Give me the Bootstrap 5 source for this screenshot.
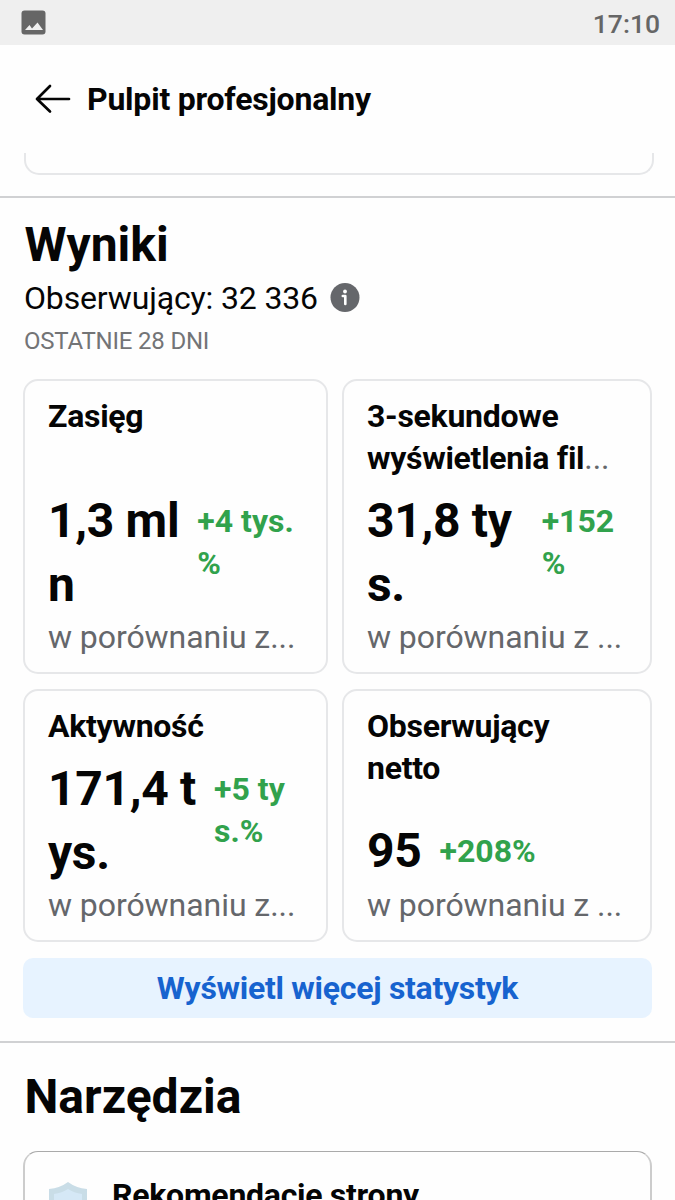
<!DOCTYPE html>
<html lang="pl">
<head>
<meta charset="utf-8">
<meta name="viewport" content="width=device-width, initial-scale=1">
<title>Pulpit profesjonalny</title>
<link href="https://cdn.jsdelivr.net/npm/bootstrap@5.3.0/dist/css/bootstrap.min.css" rel="stylesheet">
<style>
  body { font-family: Roboto, "Liberation Sans", sans-serif; color: #050505; background: #fefefe; width: 675px; height: 1200px; overflow: hidden; font-size: 32px; line-height: 42px; }
  .statusbar { height: 45px; background: #efefef; color: #666; font-size: 26.5px; font-weight: 500; line-height: 43px; padding: 0 15px 0 21px; }
  .clock { padding-top: 2px; }
  .topbar { height: 107px; padding: 0 35px; gap: 16px; }
  .topbar h1 { font-size: 32px; line-height: 42px; font-weight: 700; letter-spacing: -.22px; }
  .prev-panel { height: 22px; margin: 1px 21px 0 24px; border: 2px solid #e6e7e9; border-top: 0; border-radius: 0 0 15px 15px; }
  .rule { height: 2px; background: #d0d1d3; }
  .rule-first { margin-top: 21px; }
  .rule-second { margin-top: 23px; }
  .section { padding: 0 23px; }
  .section h2 { font-size: 48px; line-height: 64px; font-weight: 700; padding-left: 1.5px; }
  .results { padding-top: 15px; }
  .followers { padding-left: 1px; gap: 12px; letter-spacing: -.15px; }
  .period { font-size: 24px; line-height: 32px; color: #737476; padding-left: 1px; letter-spacing: -.2px; margin-top: 6px; }
  .stats { display: grid; grid-template-columns: 305px 310px; grid-template-rows: 295px 253px; column-gap: 14px; row-gap: 15px; margin-top: 22px; }
  .stat { border: 2px solid #e6e7e9; border-radius: 15px; padding: 14px 20px 14px 23px; background: #fefefe; }
  .stat h3 { font-size: 32px; line-height: 42px; font-weight: 700; letter-spacing: -.28px; white-space: nowrap; }
  .figure-row { gap: 18px; white-space: nowrap; margin-bottom: -1px; }
  .figure-row.single { margin-bottom: 1px; }
  .amount { font-size: 48px; line-height: 64px; font-weight: 700; letter-spacing: -.3px; }
  .change { color: #31a24c; font-weight: 700; margin-top: 11px; }
  .muted { color: #65676b; white-space: nowrap; letter-spacing: -.06px; }
  .more { height: 60px; border-radius: 10px; background: #e7f3ff; color: #1763cf; font-size: 32px; line-height: 42px; font-weight: 700; padding: 0; border: 0; letter-spacing: -.28px; }
  .tools h2 { margin: 22px 0; }
  .tool { height: 49px; border: 2px solid #ccc; border-top: 1px solid #aaa; border-bottom: 0; border-radius: 15px 15px 0 0; padding: 22px 23px 0; gap: 24px; font-weight: 700; letter-spacing: -.26px; }
  .tool svg { margin-top: 7px; }
</style>
</head>
<body>
<header>
  <div class="statusbar d-flex justify-content-between align-items-center">
    <svg width="25" height="25" viewBox="0 0 25 25"><rect x=".5" y=".5" width="24" height="24" rx="3" fill="#666"/><path d="M4 20 8.500 15l2.500 3.500 5.500-6 5.500 7.500z" fill="#efefef"/></svg>
    <span class="clock">17:10</span>
  </div>
  <nav class="topbar d-flex align-items-center">
    <svg width="36" height="30" viewBox="0 0 36 30" fill="none" stroke="#050505" stroke-width="2.700" stroke-linecap="round" stroke-linejoin="round"><path d="M15 2 2 15l13 12.500M2 15h32"/></svg>
    <h1 class="m-0">Pulpit profesjonalny</h1>
  </nav>
</header>
<main>
  <div class="prev-panel"></div>
  <div class="rule rule-first"></div>
  <section class="section results">
    <h2 class="m-0">Wyniki</h2>
    <div class="followers d-flex align-items-center">
      <span>Obserwujący: 32 336</span>
      <svg width="30" height="30" viewBox="0 0 30 30"><circle cx="15" cy="14.500" r="14.500" fill="#65676b"/><circle cx="15" cy="8.500" r="1.900" fill="#fff"/><path d="M12.800 13h2.500v8" fill="none" stroke="#fff" stroke-width="2.600" stroke-linecap="round" stroke-linejoin="round"/></svg>
    </div>
    <div class="period">OSTATNIE 28 DNI</div>
    <div class="stats">
      <article class="stat d-flex flex-column">
        <h3 class="m-0">Zasięg</h3>
        <div class="figure-row d-flex mt-auto"><span class="amount">1,3 ml<br>n</span><span class="change">+4 tys.<br>%</span></div>
        <div class="muted">w porównaniu z...</div>
      </article>
      <article class="stat d-flex flex-column">
        <h3 class="m-0">3-sekundowe<br>wyświetlenia fil<span class="muted fw-normal">...</span></h3>
        <div class="figure-row d-flex mt-auto"><span class="amount pe-2 me-1">31,8 ty<br>s.</span><span class="change">+152<br>%</span></div>
        <div class="muted">w porównaniu z ...</div>
      </article>
      <article class="stat d-flex flex-column">
        <h3 class="m-0">Aktywność</h3>
        <div class="figure-row d-flex mt-auto"><span class="amount">171,4 t<br>ys.</span><span class="change">+5 ty<br>s.%</span></div>
        <div class="muted">w porównaniu z...</div>
      </article>
      <article class="stat d-flex flex-column">
        <h3 class="m-0">Obserwujący<br>netto</h3>
        <div class="figure-row single d-flex mt-auto"><span class="amount">95</span><span class="change">+208%</span></div>
        <div class="muted">w porównaniu z ...</div>
      </article>
    </div>
    <button class="more btn w-100 mt-3" type="button">Wyświetl więcej statystyk</button>
  </section>
  <div class="rule rule-second"></div>
  <section class="section tools">
    <h2>Narzędzia</h2>
    <div class="tool d-flex align-items-start overflow-hidden">
      <svg class="flex-shrink-0" width="40" height="46" viewBox="0 0 40 46"><path d="M20 1 Q28 7 39 8v20q0 10-19 17Q1 38 1 28V8Q12 7 20 1z" fill="#c9dde7"/><path d="M20 8Q26 12 34 13v14q0 8-14 13Q6 35 6 27V13Q14 12 20 8z" fill="#d5e8f6"/></svg>
      <span>Rekomendacje strony</span>
    </div>
  </section>
</main>
<script src="https://cdn.jsdelivr.net/npm/bootstrap@5.3.0/dist/js/bootstrap.bundle.min.js"></script>
</body>
</html>
